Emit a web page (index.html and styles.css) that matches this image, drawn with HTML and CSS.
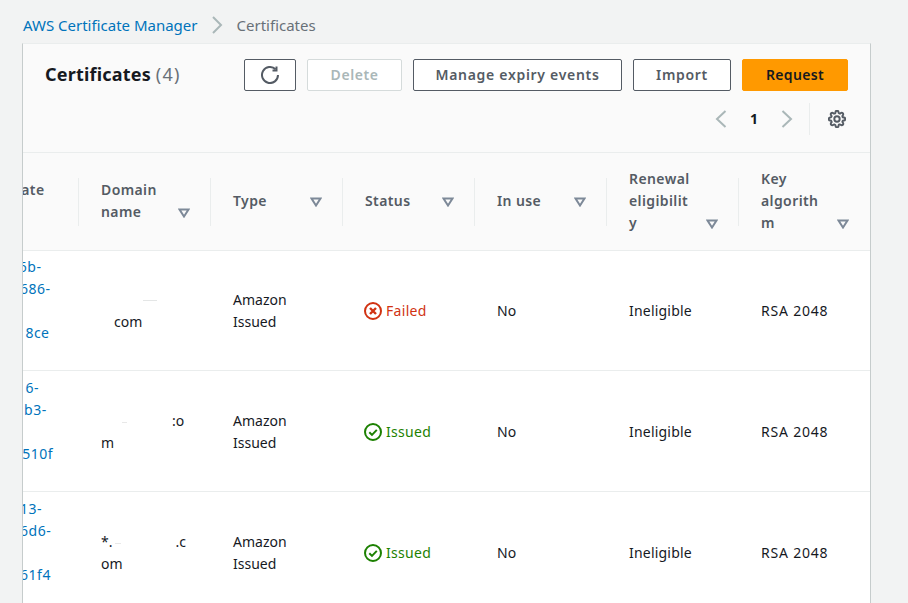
FILE: index.html
```html
<!DOCTYPE html>
<html lang="en">
<head>
    <meta charset="UTF-8">
    <title>Certificates</title>
    <link rel="stylesheet" href="styles.css">
</head>
<body>
    <nav class="breadcrumb">
        <a href="#">AWS Certificate Manager</a>
        <svg class="crumb-sep" width="12" height="18" viewBox="0 0 12 18"><path d="M2 1 L10 9 L2 17"/></svg>
        <span>Certificates</span>
    </nav>

    <section class="card">
        <header class="card-head">
            <div class="head-top">
                <h1>Certificates <span class="count">(4)</span></h1>
                <div class="actions">
                    <button class="btn btn-icon">
                        <svg width="18" height="18" viewBox="0 0 18 18"><path class="ico" d="M17 9a8 8 0 1 1-2.4-5.7"/><path class="ico" d="M15.5 .5v4h-4"/></svg>
                    </button>
                    <button class="btn btn-delete" disabled>Delete</button>
                    <button class="btn btn-manage">Manage expiry events</button>
                    <button class="btn btn-import">Import</button>
                    <button class="btn btn-request">Request</button>
                </div>
            </div>
            <div class="pager">
                <svg class="chev" width="12" height="18" viewBox="0 0 12 18"><path d="M10.5 1 L2 9 L10.5 17"/></svg>
                <span class="page-num">1</span>
                <svg class="chev" width="12" height="18" viewBox="0 0 12 18"><path d="M1.5 1 L10 9 L1.5 17"/></svg>
                <span class="pager-sep"></span>
                <svg class="gear" width="18" height="18" viewBox="0 0 24 24"><circle cx="12" cy="12" r="3.6"/><path d="M19.4 15a1.65 1.65 0 0 0 .33 1.82l.06.06a2 2 0 0 1 0 2.83 2 2 0 0 1-2.83 0l-.06-.06a1.65 1.65 0 0 0-1.82-.33 1.65 1.65 0 0 0-1 1.51V21a2 2 0 0 1-2 2 2 2 0 0 1-2-2v-.09A1.65 1.65 0 0 0 9 19.4a1.65 1.65 0 0 0-1.82.33l-.06.06a2 2 0 0 1-2.83 0 2 2 0 0 1 0-2.83l.06-.06a1.65 1.65 0 0 0 .33-1.82 1.65 1.65 0 0 0-1.51-1H3a2 2 0 0 1-2-2 2 2 0 0 1 2-2h.09A1.65 1.65 0 0 0 4.6 9a1.65 1.65 0 0 0-.33-1.82l-.06-.06a2 2 0 0 1 0-2.83 2 2 0 0 1 2.83 0l.06.06a1.65 1.65 0 0 0 1.82.33H9a1.65 1.65 0 0 0 1-1.51V3a2 2 0 0 1 2-2 2 2 0 0 1 2 2v.09a1.65 1.65 0 0 0 1 1.51 1.65 1.65 0 0 0 1.82-.33l.06-.06a2 2 0 0 1 2.83 0 2 2 0 0 1 0 2.83l-.06.06a1.65 1.65 0 0 0-.33 1.82V9a1.65 1.65 0 0 0 1.51 1H21a2 2 0 0 1 2 2 2 2 0 0 1-2 2h-.09a1.65 1.65 0 0 0-1.51 1z"/></svg>
            </div>
        </header>

        <div class="table-wrap">
            <table>
                <thead>
                    <tr>
                        <th><div class="th-cell"><div class="th-inner"><span class="th-label">Certificate<br>ID</span></div></div></th>
                        <th><div class="th-cell"><div class="th-inner"><span class="th-label">Domain<br>name</span><svg class="caret" width="12" height="10" viewBox="0 0 12 10"><path d="M1.5 1.5h9L6 8.5z"/></svg></div></div></th>
                        <th><div class="th-cell"><div class="th-inner"><span class="th-label">Type</span><svg class="caret" width="12" height="10" viewBox="0 0 12 10"><path d="M1.5 1.5h9L6 8.5z"/></svg></div></div></th>
                        <th><div class="th-cell"><div class="th-inner"><span class="th-label">Status</span><svg class="caret" width="12" height="10" viewBox="0 0 12 10"><path d="M1.5 1.5h9L6 8.5z"/></svg></div></div></th>
                        <th><div class="th-cell"><div class="th-inner"><span class="th-label">In use</span><svg class="caret" width="12" height="10" viewBox="0 0 12 10"><path d="M1.5 1.5h9L6 8.5z"/></svg></div></div></th>
                        <th><div class="th-cell"><div class="th-inner"><span class="th-label">Renewal<br>eligibilit<br>y</span><svg class="caret" width="12" height="10" viewBox="0 0 12 10"><path d="M1.5 1.5h9L6 8.5z"/></svg></div></div></th>
                        <th><div class="th-cell last"><div class="th-inner"><span class="th-label">Key<br>algorith<br>m</span><svg class="caret" width="12" height="10" viewBox="0 0 12 10"><path d="M1.5 1.5h9L6 8.5z"/></svg></div></div></th>
                    </tr>
                </thead>
                <tbody>
                    <tr>
                        <td><a class="cert-id" href="#">4c21076b-<br>a30417686-<br>&nbsp;<br><span class="hidden-part">304217f</span>8ce<br>&nbsp;</a></td>
                        <td><span class="smudge smudge-a"></span><br><span class="gap-s"></span>com</td>
                        <td>Amazon<br>Issued</td>
                        <td><span class="status failed"><svg width="18" height="18" viewBox="0 0 18 18"><circle cx="9" cy="9" r="8"/><path class="mark-x" d="M6 6l6 6M12 6l-6 6"/></svg>Failed</span></td>
                        <td>No</td>
                        <td class="wide">Ineligible</td>
                        <td class="algo">RSA 2048</td>
                    </tr>
                    <tr>
                        <td><a class="cert-id" href="#"><span class="hidden-part">907142f</span>6-<br><span class="hidden-part">fc40291</span>b3-<br>&nbsp;<br>f2f0419510f<br>&nbsp;</a></td>
                        <td><span class="smudge smudge-b"></span>:o<br>m</td>
                        <td>Amazon<br>Issued</td>
                        <td><span class="status issued"><svg width="18" height="18" viewBox="0 0 18 18"><circle cx="9" cy="9" r="8"/><path d="M5.3 9.2l2.7 2.7 4.8-5"/></svg>Issued</span></td>
                        <td>No</td>
                        <td class="wide">Ineligible</td>
                        <td class="algo">RSA 2048</td>
                    </tr>
                    <tr>
                        <td><a class="cert-id" href="#">97410213-<br>8205476d6-<br>&nbsp;<br>30917561f4<br>&nbsp;</a></td>
                        <td>*.<span class="smudge smudge-c"></span>.c<br>om</td>
                        <td>Amazon<br>Issued</td>
                        <td><span class="status issued"><svg width="18" height="18" viewBox="0 0 18 18"><circle cx="9" cy="9" r="8"/><path d="M5.3 9.2l2.7 2.7 4.8-5"/></svg>Issued</span></td>
                        <td>No</td>
                        <td class="wide">Ineligible</td>
                        <td class="algo">RSA 2048</td>
                    </tr>
                </tbody>
            </table>
        </div>
    </section>
</body>
</html>
```

FILE: styles.css
```css
html, body {
    height: 100%;
}
body {
    margin: 0;
    overflow: hidden;
    background-color: #f2f3f3;
    color: #16191f;
    font-family: "Noto Sans", Arial, sans-serif;
    font-size: 14px;
    line-height: 22px;
}
a {
    color: #0073bb;
    text-decoration: none;
}
.breadcrumb {
    display: flex;
    align-items: center;
    height: 43px;
    padding: 7px 0 0 23px;
    box-sizing: border-box;
    color: #687078;
    font-size: 15px;
}
.crumb-sep {
    margin: 0 14px 0 13px;
}
.crumb-sep path, .chev path {
    fill: none;
    stroke: #aab7b8;
    stroke-width: 2;
}
.card {
    width: 849px;
    margin-left: 22px;
    box-sizing: border-box;
    border-left: 1px solid #c6cccc;
    border-right: 1px solid #c6cccc;
    border-top: 1px solid #eaeded;
    background: #fff;
}
.card-head {
    height: 109px;
    box-sizing: border-box;
    background: #fafafa;
    border-bottom: 1px solid #eaeded;
}
.head-top {
    display: flex;
    justify-content: space-between;
    padding: 15px 22px 0 22px;
}
h1 {
    margin: 0;
    font-size: 18px;
    line-height: 30px;
    font-weight: 700;
    letter-spacing: 0.2px;
}
.count {
    font-weight: 400;
    color: #687078;
    letter-spacing: 1.2px;
}
.actions {
    display: flex;
    gap: 11px;
}
.btn {
    height: 32px;
    padding: 0 0 2px;
    border: 1px solid #545b64;
    border-radius: 2px;
    background: #fff;
    color: #545b64;
    font-family: inherit;
    font-size: 14px;
    font-weight: 600;
    letter-spacing: 0.35px;
}
.btn-icon {
    width: 52px;
    padding: 0;
    display: flex;
    align-items: center;
    justify-content: center;
}
.ico {
    fill: none;
    stroke: #545b64;
    stroke-width: 2;
}
.btn-delete {
    width: 95px;
    border-color: #d5dbdb;
    color: #aab7b8;
    letter-spacing: 0.55px;
}
.btn-manage {
    width: 209px;
    letter-spacing: 0.7px;
}
.btn-import {
    width: 98px;
    letter-spacing: 0.7px;
}
.btn-request {
    width: 106px;
    border-color: #ff9900;
    background: #ff9900;
    color: #16191f;
}
.pager {
    display: flex;
    align-items: center;
    justify-content: flex-end;
    height: 32px;
    margin-top: 12px;
    padding-right: 24px;
}
.page-num {
    width: 54px;
    text-align: center;
    font-weight: 700;
}
.pager-sep {
    width: 1px;
    height: 32px;
    margin: 0 18px 0 16px;
    background: #eaeded;
}
.gear {
    fill: none;
    stroke: #545b64;
    stroke-width: 2.6;
}
.table-wrap {
    overflow: hidden;
}
table {
    table-layout: fixed;
    width: 924px;
    margin-left: -76px;
    border-collapse: separate;
    border-spacing: 0;
}
th {
    width: 132px;
    height: 97px;
    padding: 0;
    background: #fafafa;
    border-bottom: 1px solid #eaeded;
    color: #545b64;
    font-weight: 600;
    letter-spacing: 0.4px;
    text-align: left;
}
.th-cell {
    display: flex;
    align-items: center;
    height: 48px;
    padding: 0 20px 0 22px;
    border-right: 1px solid #eaeded;
}
.th-cell.last {
    border-right: 0;
    padding-right: 22px;
}
.th-inner {
    flex: 1;
    display: flex;
    align-items: flex-end;
    margin-top: -2px;
}
.th-label {
    flex: 1;
}
.caret {
    flex: none;
    margin-bottom: 5px;
    fill: none;
    stroke: #7d8998;
    stroke-width: 2;
}
td {
    box-sizing: border-box;
    height: 121px;
    padding: 2px 0 0 22px;
    border-bottom: 1px solid #eaeded;
    white-space: nowrap;
    overflow: hidden;
}
tbody tr:first-child td {
    height: 120px;
    padding-top: 0;
}
.cert-id {
    letter-spacing: 0.5px;
}
.hidden-part {
    color: #fff;
}
.wide {
    letter-spacing: 0.2px;
}
.algo {
    letter-spacing: 0.8px;
}
.status {
    display: flex;
    align-items: center;
    gap: 4px;
    margin-left: -1px;
    letter-spacing: 0.3px;
}
.status svg {
    fill: none;
    stroke-width: 2;
}
.status .mark-x {
    stroke-width: 2.4;
}
.failed {
    color: #d13212;
}
.failed svg {
    stroke: #d13212;
}
.issued {
    color: #1d8102;
}
.issued svg {
    stroke: #1d8102;
}
.smudge {
    display: inline-block;
    height: 1px;
    vertical-align: middle;
}
.smudge-a {
    width: 85px;
    background: linear-gradient(90deg, transparent 50%, #e4e6e6 50%, #e4e6e6 66%, transparent 66%);
}
.smudge-b {
    width: 71px;
    background: linear-gradient(90deg, transparent 30%, #e8e8e8 30%, #e8e8e8 36%, transparent 36%);
}
.smudge-c {
    width: 63px;
    background: linear-gradient(90deg, transparent 4%, #e8e8e8 4%, #e8e8e8 14%, transparent 14%);
}
.gap-s {
    display: inline-block;
    width: 13px;
}
```
